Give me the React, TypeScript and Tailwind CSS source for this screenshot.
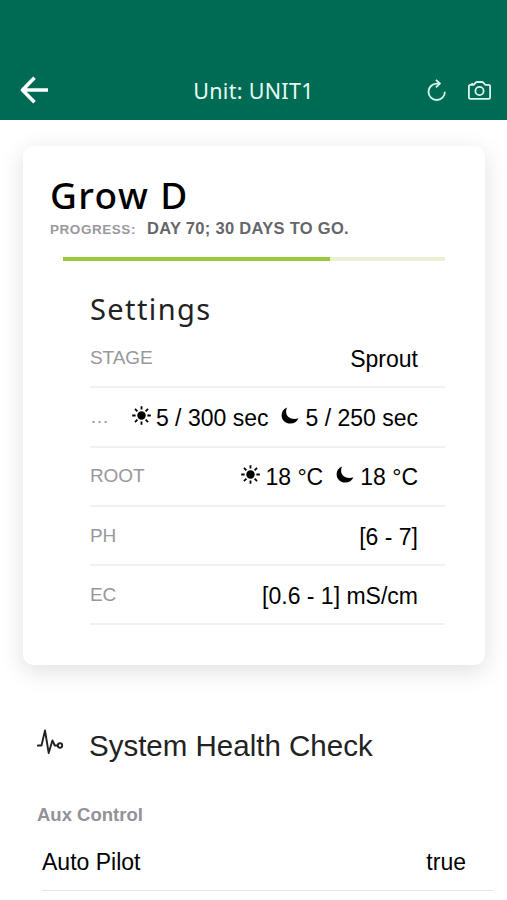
import React from 'react'

interface SettingRowProps {
  label: string
  children: React.ReactNode
}

const SunIcon = () => (
  <svg className="w-[19px] h-[19px] -mt-[5px] mr-[5px] shrink-0" viewBox="0 0 18 18" fill="none" stroke="#000" strokeWidth="1.7">
    <circle cx="9" cy="9" r="4" fill="#000" stroke="none" />
    <path d="M9 .2v3.200M9 14.600v3.200M.2 9h3.200M14.600 9h3.200M2.800 2.800l2.300 2.300M12.900 12.900l2.300 2.300M2.800 15.200l2.300-2.300M12.900 5.100l2.300-2.300" />
  </svg>
)

const MoonIcon = () => (
  <svg className="w-[18px] h-[18px] -mt-[4px] ml-[13px] mr-[6px] shrink-0" viewBox="0 0 18 18" fill="#000">
    <path d="M6 .6C2.700 1.900.6 4.800.6 8.200c0 4.900 3.900 8.400 8.700 8.400 3.800 0 6.800-2 8.100-5.300-1.200.5-2.500.7-3.800.7C8.700 12 5.100 9 5.100 4.800 5.100 3.400 5.400 2 6 .6z" />
  </svg>
)

const SettingRow: React.FC<SettingRowProps> = ({ label, children }) => (
  <div className="h-[59.3px] flex items-center justify-between border-b-2 border-[#f1f1f2] pr-[27px]">
    <span className="text-[19px] leading-6 text-[#98989c] tracking-[-0.1px]">{label}</span>
    <span className="flex items-center text-[23px] leading-7 pt-[2px] text-black whitespace-pre">{children}</span>
  </div>
)

const Header = () => (
  <header className="h-[120px] bg-[#006b54] pt-[62px] text-white">
    <div className="grid grid-cols-[1fr_auto_1fr] h-[57px] items-center">
      <svg className="w-7 h-7 ml-[20px] -mt-px" viewBox="0 0 28 28" fill="none" stroke="currentColor" strokeWidth="3.6">
        <path d="M28 14H2.500M14.500 1.800L2.500 14l12 12.200" strokeLinejoin="round" />
      </svg>
      <h1 className="font-['Noto_Sans',sans-serif] text-[21.500px] leading-7 tracking-[0.3px] text-[#e6fbf3]">Unit: UNIT1</h1>
      <div className="flex items-center justify-end gap-[22px] pr-4 text-[#d9f5ec]">
        <svg className="w-[19px] h-[22px] -mt-[2px]" viewBox="0 0 19 22" fill="none" stroke="currentColor" strokeWidth="1.8">
          <path d="M12.300 4.600H9.700a8.200 8.200 0 1 0 8.200 8.200" />
          <path d="M8.900 .8l4 3.800-4 3.800" />
        </svg>
        <svg className="w-[23px] h-[19px]" viewBox="0 0 23 19" fill="none" stroke="currentColor" strokeWidth="1.8">
          <path d="M2.300 3.900h3.400l2-2.200c.4-.5.8-.7 1.400-.7h4.800c.6 0 1 .2 1.400.7l2 2.200h3.400c.8 0 1.400.6 1.400 1.400v11.100c0 .8-.6 1.400-1.400 1.400H2.300c-.8 0-1.400-.6-1.400-1.400V5.300c0-.8.600-1.400 1.400-1.400z" />
          <circle cx="11.500" cy="10" r="4.100" />
          <path d="M3.300 3V2.600h2" strokeWidth="1" />
        </svg>
      </div>
    </div>
  </header>
)

const App = () => {
  const progress = 70

  return (
    <div className="w-full h-[900px] overflow-hidden bg-white font-['Liberation_Sans',Arial,sans-serif]">
      <Header />

      {/* Grow card */}
      <section className="mt-[26px] ml-[23px] mr-[22px] h-[519px] rounded-[10px] bg-white shadow-[0_6px_24px_rgba(0,0,0,0.13)] pl-[27px] pr-10 pt-[24px]">
        <h2 className="h-[47px] font-['Noto_Sans',sans-serif] font-medium text-[37px] leading-[49px] tracking-[1.4px] text-black whitespace-nowrap">Grow D</h2>
        <p className="flex items-baseline h-[23px] leading-[22px] font-bold whitespace-nowrap">
          <span className="text-[13.5px] tracking-[0.55px] text-[#99999d]">PROGRESS:</span>
          <span className="ml-[11px] text-[16.5px] tracking-[0.3px] text-[#66666a]">DAY 70; 30 DAYS TO GO.</span>
        </p>
        <div className="mt-[17px] ml-[13px] h-1 bg-[#e9f1d2]">
          <div className="h-full bg-[#99c83c]" style={{ width: `${progress}%` }} />
        </div>
        <div className="ml-10 mt-[28px]">
          <h3 className="h-[40px] font-['Noto_Sans',sans-serif] text-[29px] leading-[39px] tracking-[1.4px] text-[#222]">Settings</h3>
          <SettingRow label="STAGE">Sprout</SettingRow>
          <SettingRow label="…">
            <SunIcon />5 / 300 sec<MoonIcon />5 / 250 sec
          </SettingRow>
          <SettingRow label="ROOT">
            <SunIcon />18 °C<MoonIcon />18 °C
          </SettingRow>
          <SettingRow label="PH">[6 - 7]</SettingRow>
          <SettingRow label="EC">[0.6 - 1] mS/cm</SettingRow>
        </div>
      </section>

      {/* Health check */}
      <section className="pt-[62px]">
        <div className="flex items-center h-[38px] pl-[37px]">
          <svg className="w-[27px] h-[26px] -mt-[9px] mr-[25px]" viewBox="0 0 27 26" fill="none" stroke="#222" strokeWidth="1.900" strokeLinejoin="round" strokeLinecap="round">
            <path d="M.9 16.500h3.600L8 1.500 11.700 24l3.700-12.500 2.400 5h2.700" />
            <circle cx="23" cy="16.500" r="2.200" />
          </svg>
          <h2 className="text-[29.5px] leading-9 text-[#222] whitespace-nowrap">System Health Check</h2>
        </div>
        <h4 className="mt-[38px] ml-[37px] h-6 leading-6 text-[18.500px] font-bold text-[#929297]">Aux Control</h4>
        <div className="ml-[42px] mr-[14px] mt-[7px] h-[57px] flex items-center justify-between pr-[27px] border-b-[1.500px] border-[#e4e4e7] text-[23px] leading-7 text-black">
          <span>Auto Pilot</span>
          <span>true</span>
        </div>
      </section>
    </div>
  )
}

export default App
